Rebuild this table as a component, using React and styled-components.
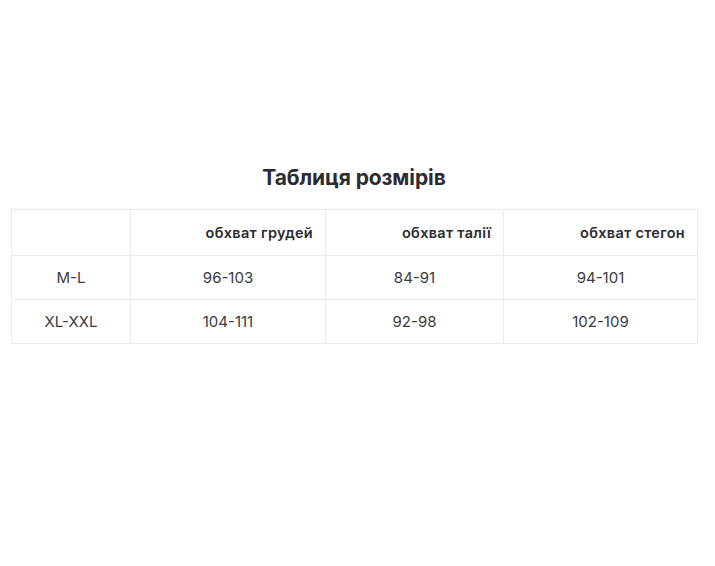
import React from "react";
import styled, { createGlobalStyle } from "styled-components";

const Global = createGlobalStyle`
  html, body { margin: 0; padding: 0; background: #fff; }
  body { font-family: Inter, "Noto Sans", Arial, sans-serif; color: #2b2b31; }
`;

const Page = styled.div`
  padding: 163px 18px 0 11px;
  display: flex;
  flex-direction: column;
  align-items: stretch;
`;

const Title = styled.h2`
  margin: 0 0 16px 0;
  text-align: center;
  font-size: 21px;
  line-height: 30px;
  font-weight: 700;
  color: #2b2b31;
  letter-spacing: -0.1px;
`;

const Table = styled.table`
  border-collapse: collapse;
  width: 686px;
  table-layout: fixed;
`;

const Th = styled.th`
  border: 1px solid #ebebef;
  height: 46px;
  padding: 0 12px;
  text-align: right;
  font-size: 14.5px;
  font-weight: 600;
  letter-spacing: 0.3px;
  color: #2b2b31;
  width: ${(p) => p.$w}px;
  box-sizing: border-box;
`;

const Td = styled.td`
  border: 1px solid #ebebef;
  height: 43px;
  padding: 0;
  text-align: center;
  font-size: 15px;
  font-weight: 400;
  color: #3a3a40;
`;

const cols = [
  { w: 119, label: "" },
  { w: 195, label: "обхват грудей" },
  { w: 178, label: "обхват талії" },
  { w: 194, label: "обхват стегон" },
];

const rows = [
  ["M-L", "96-103", "84-91", "94-101"],
  ["XL-XXL", "104-111", "92-98", "102-109"],
];

export default function App() {
  return (
    <>
      <Global />
      <Page>
        <Title>Таблиця розмірів</Title>
        <Table>
          <thead>
            <tr>
              {cols.map((c, i) => (
                <Th key={i} $w={c.w}>{c.label}</Th>
              ))}
            </tr>
          </thead>
          <tbody>
            {rows.map((r, i) => (
              <tr key={i}>
                {r.map((v, j) => (
                  <Td key={j}>{v}</Td>
                ))}
              </tr>
            ))}
          </tbody>
        </Table>
      </Page>
    </>
  );
}
